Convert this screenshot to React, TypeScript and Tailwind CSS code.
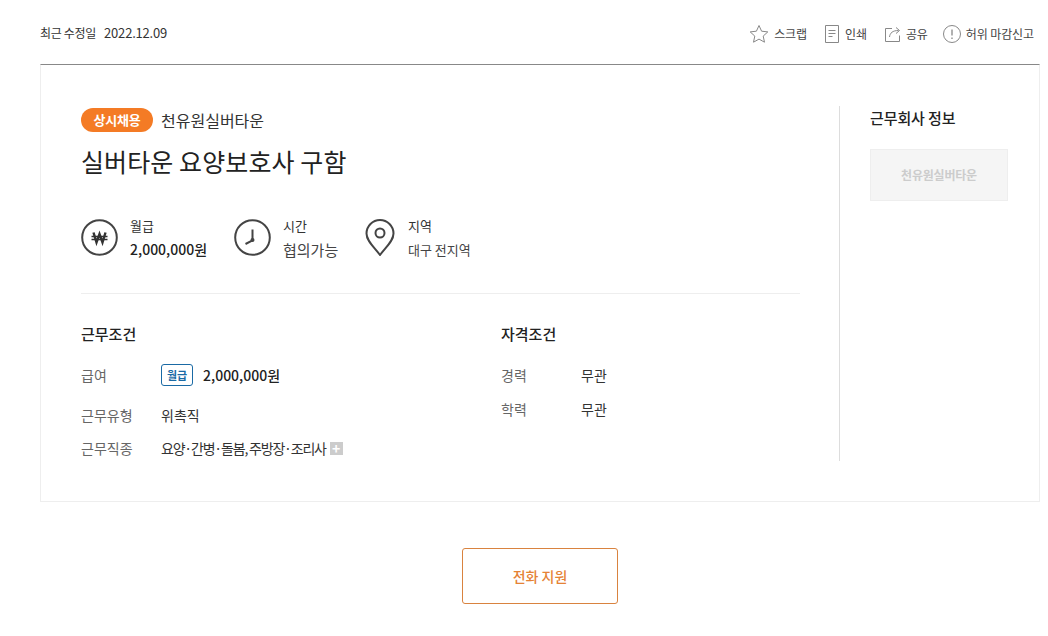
import React from "react";

const font = { fontFamily: '"Noto Sans CJK KR", "Noto Sans", sans-serif' };

const Row = ({ label, children, className = "" }: { label: string; children: React.ReactNode; className?: string }) => (
  <div className={`flex items-center h-[24px] text-[14px] ${className}`}>
    <span className="w-[80px] text-[#666]">{label}</span>
    <div className="flex items-center text-[#333]">{children}</div>
  </div>
);

const Summary = ({ icon, title, value, valueClass, className }: { icon: React.ReactNode; title: string; value: string; valueClass: string; className: string }) => (
  <div className={`flex items-center ${className}`}>
    {icon}
    <div className="flex flex-col gap-[5px] text-[13px] leading-[19px]">
      <span className="text-[#333]">{title}</span>
      <span className={valueClass}>{value}</span>
    </div>
  </div>
);

export default function App() {
  return (
    <div className="w-[1048px] h-[636px] bg-white overflow-hidden pl-[40px]" style={font}>
      {/* top bar */}
      <div className="w-[1000px] h-[64px] flex items-start justify-between pt-[24px]">
        <div className="flex gap-[8px] text-[12px] leading-[18px] text-[#333] tracking-[-0.3px]">
          <span>최근 수정일</span>
          <span className="text-[13px] tracking-[-0.2px]">2022.12.09</span>
        </div>
        <div className="flex items-center text-[12px] leading-[18px] text-[#444] tracking-[-0.1px] mr-[6px]">
          <svg width="20" height="20" viewBox="0 0 20 20" fill="none" stroke="#888" strokeWidth="1" className="mr-[5px]">
            <path d="M10 1.500l2.600 5.700 6.200.7-4.600 4.200 1.300 6.100L10 15.100l-5.500 3.100 1.300-6.100L1.200 7.900l6.200-.7z" />
          </svg>
          <span>스크랩</span>
          <svg width="14" height="18" viewBox="0 0 14 18" fill="none" stroke="#888" strokeWidth="1" className="ml-[18px] mr-[6px]">
            <path d="M.5.5h13v17H.5zM3.500 5.500h7M3.500 8.500h7M3.500 11.500h4" />
          </svg>
          <span>인쇄</span>
          <svg width="17" height="18" viewBox="0 0 17 18" fill="none" stroke="#888" strokeWidth="1" className="ml-[18px] mr-[4px]">
            <path d="M7 3.500H.5v13h14v-6M4.500 12c.5-4 3-6.500 9-6.500M11 2.500l3.500 3-3.500 3" />
          </svg>
          <span>공유</span>
          <svg width="18" height="18" viewBox="0 0 18 18" fill="none" stroke="#888" strokeWidth="1" className="ml-[15px] mr-[5px]">
            <circle cx="9" cy="9" r="8.500" />
            <path d="M9 4.500v6M9 12.500v1.500" strokeWidth="1.300" />
          </svg>
          <span>허위 마감신고</span>
        </div>
      </div>

      {/* card */}
      <div className="w-[1000px] h-[438px] border border-[#eee] border-t-[#888] flex pt-[43px] pl-[40px]">
        <div className="w-[719px]">
          <div className="flex items-center h-[24px]">
            <span className="w-[72px] h-[24px] rounded-full bg-[#f47b25] text-white text-[13px] tracking-[-0.2px] font-bold flex items-center justify-center">상시채용</span>
            <span className="ml-[8px] text-[16px] text-[#333]">천유원실버타운</span>
          </div>
          <h1 className="mt-[11px] text-[25px] leading-[36px] font-normal text-[#222] tracking-[0.1px]">실버타운 요양보호사 구함</h1>

          <div className="flex mt-[33px] h-[50px]">
            <Summary
              className="w-[153px]"
              title="월급"
              value="2,000,000원"
              valueClass="text-[14px] font-medium text-[#222]"
              icon={
                <svg width="37" height="37" viewBox="0 0 37 37" fill="none" stroke="#444" className="mr-[12px] shrink-0">
                  <circle cx="18.500" cy="18.500" r="17.300" strokeWidth="2" />
                  <path d="M12.500 13.500l3 10 3-8.500 3 8.500 3-10" strokeWidth="2.400" stroke="#333" />
                  <path d="M10.500 17.500h16M10.500 20.500h16" strokeWidth="1.600" stroke="#333" />
                </svg>
              }
            />
            <Summary
              className="w-[131px]"
              title="시간"
              value="협의가능"
              valueClass="text-[15px] text-[#444]"
              icon={
                <svg width="37" height="37" viewBox="0 0 37 37" fill="none" stroke="#444" className="mr-[12px] shrink-0">
                  <circle cx="18.500" cy="18.500" r="17.300" strokeWidth="2" />
                  <path d="M18.500 10.500v11l-7 3.500" strokeWidth="2" />
                  <circle cx="18.500" cy="21" r="2" fill="#444" stroke="none" />
                </svg>
              }
            />
            <Summary
              className="w-[120px]"
              title="지역"
              value="대구 전지역"
              valueClass="text-[13px] text-[#444]"
              icon={
                <svg width="30" height="37" viewBox="0 0 30 37" fill="none" stroke="#444" strokeWidth="2" className="mr-[13px] shrink-0">
                  <path d="M15 36C9 28 1.500 22 1.500 14.500a13.500 13.500 0 0 1 27 0C28.500 22 21 28 15 36z" />
                  <circle cx="15" cy="14" r="4.500" />
                </svg>
              }
            />
          </div>

          <div className="mt-[31px] border-t border-[#eee]" />

          <div className="flex mt-[30px]">
            <div className="w-[420px]">
              <h2 className="text-[15px] leading-[20px] font-medium text-[#222]">근무조건</h2>
              <Row label="급여" className="mt-[19px]">
                <span className="w-[32px] h-[22px] border border-[#1a6aa5] rounded-[3px] text-[#1a6aa5] text-[11px] font-bold flex items-center justify-center mr-[10px]">월급</span>
                <span className="font-medium text-[#222]">2,000,000원</span>
              </Row>
              <Row label="근무유형" className="mt-[16px]">위촉직</Row>
              <Row label="근무직종" className="mt-[9px]">
                <span className="tracking-[-1.2px]">요양·간병·돌봄, 주방장·조리사</span>
                <span className="ml-[4px] w-[13px] h-[13px] bg-[#ccc] text-white text-[14px] font-bold leading-[13px] flex items-center justify-center">+</span>
              </Row>
            </div>
            <div>
              <h2 className="text-[15px] leading-[20px] font-medium text-[#222]">자격조건</h2>
              <Row label="경력" className="mt-[19px]">무관</Row>
              <Row label="학력" className="mt-[10px]">무관</Row>
            </div>
          </div>
        </div>

        <div className="ml-[39px] -mt-[2px] h-[355px] border-l border-[#ddd] pl-[30px]">
          <h2 className="text-[15px] leading-[24px] font-medium text-[#222] tracking-[-0.1px]">근무회사 정보</h2>
          <div className="mt-[19px] w-[138px] h-[52px] bg-[#f5f5f5] border border-[#eee] flex items-center justify-center text-[12px] font-bold tracking-[-0.2px] text-[#ccc]">천유원실버타운</div>
        </div>
      </div>

      {/* apply */}
      <div className="w-[1000px] flex justify-center mt-[46px]">
        <button className="w-[156px] h-[56px] border border-[#d9833f] rounded-[3px] text-[#e58235] text-[14px] font-medium">전화 지원</button>
      </div>
    </div>
  );
}
